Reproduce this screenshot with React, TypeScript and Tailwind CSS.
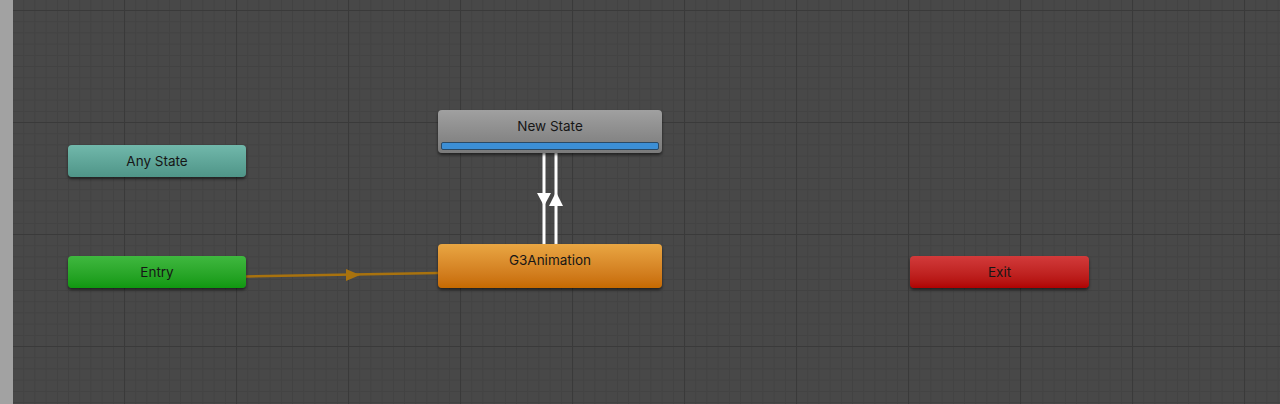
import { useMemo } from 'react';

type NodeProps = {
  label: string;
  className: string;
  bar?: boolean;
};

const StateNode = ({ label, className, bar }: NodeProps) => (
  <div
    className={`absolute flex flex-col rounded-[4px] shadow-[0_2px_3px_rgba(0,0,0,0.55)] ${className}`}
  >
    <div className="flex flex-1 items-center justify-center text-[13.5px] text-[#161616]">{label}</div>
    {bar && (
      <div className="mx-[3px] mb-[3px] h-[8px] rounded-[2px] border border-[#2a4a66] bg-[#3c8fd6]" />
    )}
  </div>
);

const GridLines = () => {
  const minor = useMemo(() => Array.from({ length: 10 }, (_, i) => i * 11.2), []);
  return (
    <svg className="absolute inset-0 h-full w-full" xmlns="http://www.w3.org/2000/svg">
      <defs>
        <pattern id="grid" x="-1" y="10" width="112" height="112" patternUnits="userSpaceOnUse">
          {minor.map((p) => (
            <g key={p}>
              <line x1={p + 0.5} y1="0" x2={p + 0.5} y2="112" stroke="#424242" strokeWidth="1" />
              <line x1="0" y1={p + 0.5} x2="112" y2={p + 0.5} stroke="#424242" strokeWidth="1" />
            </g>
          ))}
          <line x1="0.5" y1="0" x2="0.5" y2="112" stroke="#3a3a3a" strokeWidth="1.2" />
          <line x1="0" y1="0.5" x2="112" y2="0.5" stroke="#3a3a3a" strokeWidth="1.2" />
        </pattern>
      </defs>
      <rect width="100%" height="100%" fill="#484848" />
      <rect width="100%" height="100%" fill="url(#grid)" />
    </svg>
  );
};

const Transitions = () => (
  <svg className="absolute inset-0 h-full w-full" xmlns="http://www.w3.org/2000/svg">
    {/* entry -> G3Animation */}
    <line x1="233" y1="276.5" x2="425" y2="273" stroke="#a8720e" strokeWidth="2.5" />
    <polygon points="333,269 347,275 333,281" fill="#a8720e" />
    {/* New State <-> G3Animation */}
    <line x1="531" y1="153" x2="531" y2="244" stroke="#ffffff" strokeWidth="3" />
    <line x1="543" y1="153" x2="543" y2="244" stroke="#ffffff" strokeWidth="3" />
    <polygon points="524,193 538,193 531,206" fill="#ffffff" />
    <polygon points="536,206 550,206 543,192" fill="#ffffff" />
  </svg>
);

export default function App() {
  return (
    <div className="flex h-[404px] w-[1280px] overflow-hidden font-['Inter','Roboto',sans-serif]">
      <div className="h-full w-[13px] shrink-0 bg-[#a2a2a2]" />
      <div className="relative h-full flex-1">
        <GridLines />
        <Transitions />
        <StateNode
          label="Any State"
          className="left-[55px] top-[145px] h-[32px] w-[178px] bg-gradient-to-b from-[#71b8ab] to-[#4f9588]"
        />
        <StateNode
          label="Entry"
          className="left-[55px] top-[256px] h-[32px] w-[178px] bg-gradient-to-b from-[#3fb83f] to-[#0f980f]"
        />
        <StateNode
          label="New State"
          bar
          className="left-[425px] top-[110px] h-[43px] w-[224px] bg-gradient-to-b from-[#a0a0a0] to-[#7a7a7a] pt-[1px]"
        />
        <StateNode
          label="G3Animation"
          className="left-[425px] top-[244px] h-[44px] w-[224px] bg-gradient-to-b from-[#e9a642] to-[#c66a00] pb-[11px]"
        />
        <StateNode
          label="Exit"
          className="left-[897px] top-[256px] h-[32px] w-[179px] bg-gradient-to-b from-[#d23a3a] to-[#b00202]"
        />
      </div>
    </div>
  );
}
